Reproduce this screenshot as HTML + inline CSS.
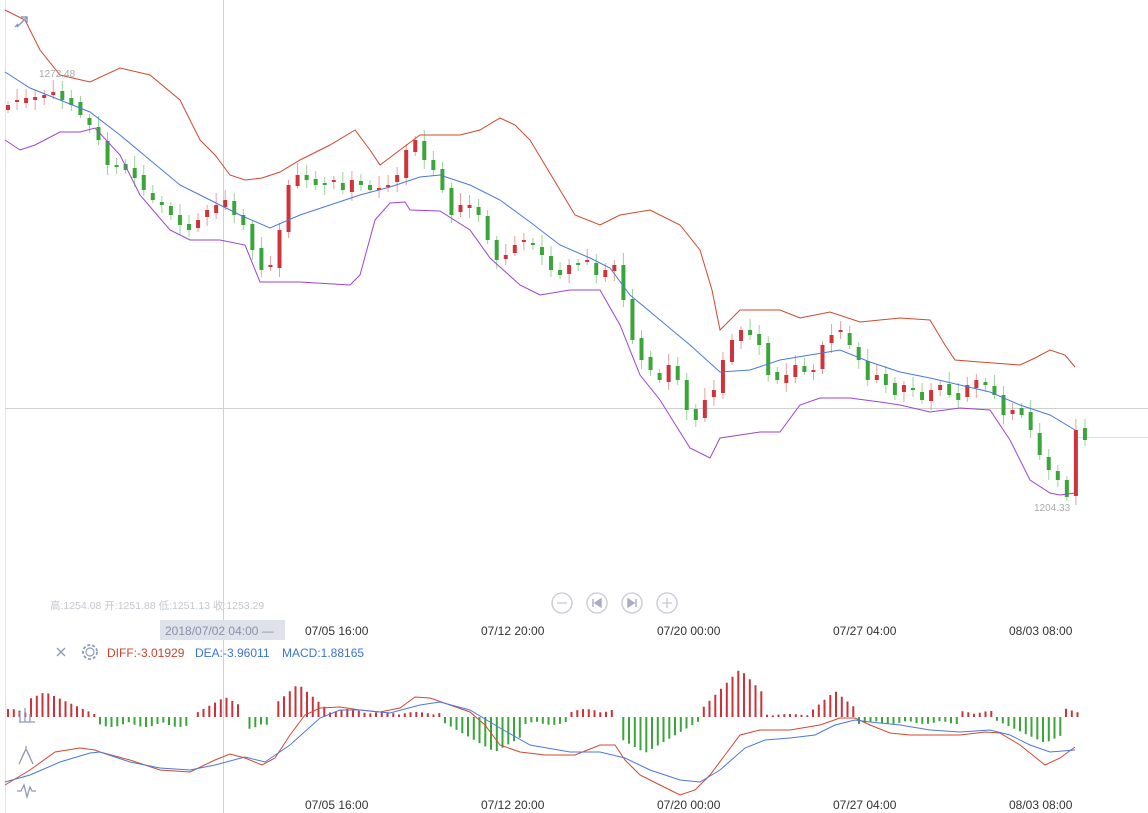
<!DOCTYPE html>
<html><head><meta charset="utf-8">
<style>
html,body{margin:0;padding:0;background:#fff;width:1148px;height:813px;overflow:hidden;font-family:"Liberation Sans","Noto Sans CJK SC",sans-serif}
svg{position:absolute;left:0;top:0}
.ax{font-size:12px;fill:#333}
</style></head><body>
<svg id="s" width="1148" height="813" viewBox="0 0 1148 813" xmlns="http://www.w3.org/2000/svg">
<line x1="5.5" y1="0" x2="5.5" y2="813" stroke="#e4e4e4"/>
<line x1="223.5" y1="0" x2="223.5" y2="813" stroke="#d0d0d0"/>
<line x1="5" y1="408.5" x2="1148" y2="408.5" stroke="#d0d0d0"/>
<line x1="1078" y1="437.5" x2="1148" y2="437.5" stroke="#ddd"/>
<g id="candles"></g>
<polyline fill="none" stroke="#d0482e" stroke-width="1" points="5,10 25,20 40,50 60,75 90,82 120,68 150,75 180,100 200,140 215,155 230,175 245,180 262,178 280,172 300,160 330,145 355,130 370,150 380,165 400,150 420,135 460,135 480,130 500,118 515,125 530,140 545,165 560,190 575,215 600,225 620,215 650,210 680,225 700,250 712,290 720,330 740,310 780,310 800,318 830,312 860,322 900,318 930,320 945,345 955,360 980,362 1020,365 1035,358 1050,350 1065,355 1075,367"/>
<polyline fill="none" stroke="#4a78e0" stroke-width="1" points="5,72 30,88 60,100 90,112 120,135 150,160 180,185 210,200 240,215 270,228 300,215 330,205 360,195 390,187 420,177 440,175 470,185 500,200 530,222 560,245 590,258 610,268 630,295 660,320 690,345 720,372 750,370 780,360 810,355 840,350 870,362 900,372 930,378 960,385 990,392 1020,405 1050,415 1075,430"/>
<polyline fill="none" stroke="#9a44d8" stroke-width="1" points="5,140 20,150 35,145 60,132 80,132 95,128 120,155 140,195 170,230 190,240 220,240 245,245 260,282 300,282 350,285 360,275 375,220 390,203 405,202 410,210 440,211 470,230 490,258 520,285 540,295 570,290 600,290 620,325 640,375 660,400 680,432 690,448 710,458 720,438 760,432 780,432 800,405 820,398 850,398 880,402 900,405 930,412 960,408 990,410 1010,440 1030,480 1050,493 1060,495 1075,493"/>
<text x="39" y="77" font-size="10" fill="#aaa">1272.48</text>
<text x="1034" y="511" font-size="10" fill="#aaa">1204.33</text>
<g stroke="#8d9ab8" stroke-width="1.5" fill="none"><path d="M17 27 L27 17 M21 17 H27 V23 M15 27 L18 24"/></g>
<text x="50" y="609" font-size="10.5" fill="#c4c7cf">高:1254.08 开:1251.88 低:1251.13 收:1253.29</text>
<g fill="none" stroke="#c6c8d4" stroke-width="1.3">
<circle cx="562" cy="603" r="10"/><circle cx="597" cy="603" r="10"/><circle cx="632" cy="603" r="10"/><circle cx="667" cy="603" r="10"/>
<path d="M557 603 H567 M662 603 H672 M667 598 V608"/>
</g>
<path d="M593 599 V607 M601 599 L595 603 L601 607Z M636 599 V607 M628 599 L634 603 L628 607Z" fill="#a8acc4" stroke="#a8acc4" stroke-width="1.4"/>
<rect x="160" y="620" width="125" height="20" fill="#dfe2ea"/>
<text x="165" y="635" font-size="12" fill="#8a90a8">2018/07/02 04:00 —</text>
<text class="ax" x="305" y="635">07/05 16:00</text><text class="ax" x="481" y="635">07/12 20:00</text><text class="ax" x="657" y="635">07/20 00:00</text><text class="ax" x="833" y="635">07/27 04:00</text><text class="ax" x="1009" y="635">08/03 08:00</text>
<text class="ax" x="305" y="809">07/05 16:00</text><text class="ax" x="481" y="809">07/12 20:00</text><text class="ax" x="657" y="809">07/20 00:00</text><text class="ax" x="833" y="809">07/27 04:00</text><text class="ax" x="1009" y="809">08/03 08:00</text>
<path d="M57 648 L65 656 M65 648 L57 656" stroke="#8d9ab8" stroke-width="1.4"/>
<circle cx="90" cy="652" r="4" fill="none" stroke="#8d9ab8" stroke-width="1.2"/>
<circle cx="90" cy="652" r="7" fill="none" stroke="#8d9ab8" stroke-width="1.8" stroke-dasharray="3 2"/>
<text x="107" y="657" font-size="12" fill="#c8442e">DIFF:-3.01929</text>
<text x="195" y="657" font-size="12" fill="#3e74d6">DEA:-3.96011</text>
<text x="282" y="657" font-size="12" fill="#3e74d6">MACD:1.88165</text>
<g id="hist"></g>
<polyline fill="none" stroke="#d0482e" points="5,785 30,770 55,752 80,748 95,750 100,752 130,760 160,770 190,772 215,760 230,754 245,758 262,765 275,758 290,735 305,715 320,708 340,707 360,710 380,712 400,708 415,697 430,698 450,705 470,712 485,725 500,745 520,752 545,755 575,755 600,745 615,745 625,760 640,775 660,785 680,795 695,790 710,775 725,755 740,735 760,730 790,730 820,725 840,718 855,718 870,725 890,733 910,735 930,735 960,735 985,732 1000,733 1020,745 1045,765 1060,758 1075,747"/>
<polyline fill="none" stroke="#4a78e0" points="5,782 30,775 60,762 90,753 100,752 130,762 160,768 190,770 215,765 245,757 265,762 290,745 320,718 340,710 360,710 390,713 420,705 440,702 470,710 500,728 530,745 570,752 600,752 625,758 650,770 680,780 700,782 720,770 745,748 765,740 790,738 815,735 835,725 855,720 870,722 900,725 930,730 960,732 990,730 1010,735 1030,745 1050,752 1075,750"/>
<g stroke="#8d9ab8" stroke-width="1.3" fill="none">
<path d="M19 722 H35 M20 722 V712 M25 722 V708 M30 722 V714"/>
<path d="M26 746 V749 M22 757 L26 749 L30 757 M19 764 L26 749 L33 764"/>
<path d="M17 791 H21 L24 785 L27 797 L30 787 L32 791 H36"/>
</g>
</svg>
<script>
var ns="http://www.w3.org/2000/svg";
var p=[105,100,98,97,95,92,100,105,115,125,140,165,165,170,178,190,200,205,215,225,230,220,210,205,200,215,225,250,270,265,230,185,175,180,185,185,180,190,180,185,190,188,185,175,150,140,160,170,190,215,205,205,215,240,260,255,245,240,245,255,270,275,265,265,260,275,270,265,300,340,360,370,380,365,380,410,420,400,390,360,340,330,335,345,375,380,375,365,372,370,345,335,330,345,360,380,375,385,395,385,390,400,390,385,395,400,385,380,385,395,415,410,415,430,455,470,480,497,430,440];
var rd="",rb="",gd="",gb="",prev=110;
for(var i=0;i<p.length;i++){var x=8+i*9.05,o=prev,c=p[i];var t=Math.min(o,c),b=Math.max(o,c);if(b-t<2)b=t+2;var wt=t-4-(i*7%9),wb=b+3+(i*5%8);
var body=" M"+x+" "+t+" V"+b,w=" M"+x+" "+wt+" V"+wb;if(c<o){rd+=w;rb+=body}else{gd+=w;gb+=body}prev=c+((i*13%7)-3);}
var g=document.getElementById("candles");
function P(d,col,sw){var e=document.createElementNS(ns,"path");e.setAttribute("d",d);e.setAttribute("stroke",col);e.setAttribute("stroke-width",sw);e.setAttribute("fill","none");g.appendChild(e);}
P(rd,"#e8a0a0",1);P(gd,"#9cd49a",1);P(rb,"#d0343a",4);P(gb,"#3aa63a",4);
var seg=[[8,30,0,8],[30,95,1,25,45],[100,190,-1,10],[195,240,1,20,225],[248,270,-1,12],[275,330,1,33,298],[330,370,1,8],[370,440,1,5],[440,520,-1,35,495],[520,570,-1,8],[570,615,1,8],[618,700,-1,36,645],[700,765,1,48,740],[765,810,1,3],[810,858,1,26,835],[858,960,-1,7],[960,995,1,6],[995,1062,-1,26,1045],[1065,1078,1,9]];
var hr="",hg="";
for(var x=8;x<1078;x+=5.75){var s=null;for(var k=0;k<seg.length;k++)if(x>=seg[k][0]&&x<seg[k][1]){s=seg[k];break;}if(!s)continue;
var h;if(s.length>4){var half=Math.max(s[4]-s[0],s[1]-s[4]);h=s[3]*(1-Math.abs(x-s[4])/(half+6));}else h=s[3]*(0.5+0.5*Math.abs(Math.sin(x)));h=Math.max(1.5,h);
var d=" M"+x.toFixed(1)+" 717 V"+(s[2]>=0?717-h:717+h).toFixed(1);if(s[2]>=0)hr+=d;else hg+=d;}
g=document.getElementById("hist");P(hr,"#c8343a",2);P(hg,"#3aa63a",2);
</script>
</body></html>
